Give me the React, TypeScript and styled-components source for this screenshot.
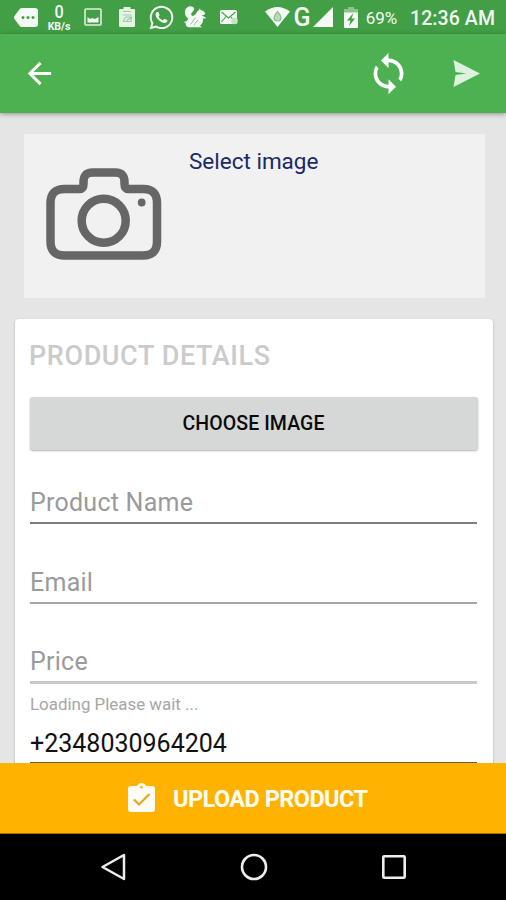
import React from "react";
import styled, { createGlobalStyle } from "styled-components";
import { MdArrowBack, MdSync } from "react-icons/md";
import { FaWhatsapp } from "react-icons/fa";

const GlobalStyle = createGlobalStyle`
  *, *::before, *::after { box-sizing: border-box; }
  body { margin: 0; font-family: Roboto, sans-serif; }
`;

const Screen = styled.div`
  width: 506px;
  height: 900px;
  display: flex;
  flex-direction: column;
  overflow: hidden;
  background: #e5e5e5;
`;

const StatusBar = styled.header`
  flex: none;
  height: 34px;
  display: flex;
  align-items: center;
  padding: 0 11px 0 14px;
  background: #429f46;
  color: #f4fbf4;
  white-space: nowrap;
`;

const StatusItem = styled.span<{ $width: number; $gap?: number }>`
  flex: none;
  width: ${(p) => p.$width}px;
  margin-left: ${(p) => p.$gap ?? 0}px;
  display: flex;
  justify-content: center;
  svg { display: block; flex: none; }
`;

const Speed = styled(StatusItem)`
  flex-direction: column;
  align-items: center;
`;

const SpeedValue = styled.span`
  font-size: 18px;
  font-weight: 500;
  line-height: 19px;
  transform: scaleX(0.9);
`;

const SpeedUnit = styled.span`
  font-size: 10.5px;
  font-weight: 700;
  line-height: 11px;
`;

const Network = styled(StatusItem)`
  font: 500 25px/30px Roboto, sans-serif;
  padding-top: 1px;
`;

const Percent = styled(StatusItem)`
  font-size: 17px;
  line-height: 34px;
  padding-top: 1px;
`;

const Clock = styled(StatusItem)`
  font-size: 19.5px;
  font-weight: 500;
  line-height: 34px;
  padding-top: 3px;
  letter-spacing: 0.1px;
`;

const AppBar = styled.nav`
  flex: none;
  z-index: 1;
  height: 79px;
  display: flex;
  align-items: center;
  padding: 0 26px 0 22px;
  background: #4eb151;
  box-shadow: 0 1px 5px rgba(0, 0, 0, 0.38);
  color: #fff;
`;

const IconButton = styled.button<{ $width: number; $gap?: string }>`
  width: ${(p) => p.$width}px;
  margin: 0 0 0 ${(p) => p.$gap ?? "0"};
  padding: 0;
  border: 0;
  background: none;
  color: inherit;
  display: flex;
  justify-content: center;
  svg { display: block; flex: none; }
`;

const Content = styled.main`
  flex: 1;
  min-height: 0;
  overflow: hidden;
  display: flex;
  flex-direction: column;
  padding: 21px 13px 0 15px;
`;

const ImagePicker = styled.section`
  flex: none;
  height: 164px;
  margin: 0 8px 21px 9px;
  padding: 34px 0 0 22px;
  display: flex;
  gap: 27px;
  background: #f1f1f1;
`;

const PickerLabel = styled.span`
  margin-top: -21px;
  font-size: 22.5px;
  line-height: 28px;
  color: #1b2a66;
`;

const Card = styled.section`
  flex: none;
  height: 500px;
  padding: 20px 16px 20px 15px;
  display: flex;
  flex-direction: column;
  border-radius: 4px;
  background: #fff;
  box-shadow: 0 1px 2px rgba(0, 0, 0, 0.35);
`;

const Title = styled.h1`
  margin: 0 0 0 -1px;
  height: 58px;
  font-size: 27px;
  font-weight: 500;
  line-height: 34px;
  letter-spacing: 0.6px;
  color: #cbcbcb;
`;

const ChooseButton = styled.button`
  flex: none;
  height: 53px;
  margin: 0 -1px 0 0;
  padding: 0 1px 0 0;
  border: 0;
  border-radius: 3px;
  background: #d6d8d7;
  box-shadow: 0 1px 2px rgba(0, 0, 0, 0.3);
  font: 500 19.5px/53px Roboto, sans-serif;
  letter-spacing: 0.1px;
  color: #0b0b0b;
`;

const Field = styled.div<{ $height: number; $line: string; $thick?: number; $value?: boolean }>`
  flex: none;
  height: ${(p) => p.$height}px;
  display: flex;
  align-items: flex-end;
  padding-bottom: ${(p) => (p.$value ? 3 : 4)}px;
  border-bottom: ${(p) => p.$thick ?? 2}px solid ${(p) => p.$line};
  font-size: 25px;
  line-height: 30px;
  letter-spacing: ${(p) => (p.$value ? 0 : 0.25)}px;
  color: ${(p) => (p.$value ? "#111" : "#9a9a9a")};
`;

const Hint = styled.div`
  height: 31px;
  padding-top: 9px;
  font-size: 16.9px;
  line-height: 22px;
  color: #a6a6a6;
`;

const UploadButton = styled.button`
  flex: none;
  z-index: 1;
  height: 71px;
  padding: 0 0 2px 128px;
  border: 0;
  border-bottom: 1px solid #a87600;
  display: flex;
  align-items: center;
  gap: 18px;
  background: #ffb300;
  color: #fffdf6;
`;

const UploadLabel = styled.span`
  padding-top: 3px;
  font: 700 23.5px/30px Roboto, sans-serif;
  letter-spacing: -0.55px;
`;

const NavBar = styled.footer`
  flex: none;
  height: 66px;
  display: flex;
  justify-content: space-between;
  align-items: center;
  padding: 0 99px 0 100px;
  background: #000;
`;

const TagIcon = () => (
  <svg width="24" height="19" viewBox="0 0 24 19">
    <path fill="currentColor" d="M8 0h13a3 3 0 0 1 3 3v13a3 3 0 0 1-3 3H8q-1.500 0-2.500-1.300L.5 11q-1-1.500 0-3l5-6.700Q6.500 0 8 0Z" />
    <g fill="#429f46"><circle cx="9" cy="9.500" r="1.500" /><circle cx="14" cy="9.500" r="1.500" /><circle cx="19" cy="9.500" r="1.500" /></g>
  </svg>
);

const PictureIcon = () => (
  <svg width="18" height="18" viewBox="0 0 18 18">
    <rect x="1" y="1" width="16" height="16" rx="1" fill="none" stroke="#dff0df" strokeWidth="1.600" />
    <path fill="currentColor" d="M3.500 14.500V9L6 11l2-1 3 1 3.500-2v5.500Z" />
  </svg>
);

const NotesIcon = () => (
  <svg width="16" height="20" viewBox="0 0 16 20">
    <path fill="#e6f4e6" d="M1 2h3.500V0h7v2H15q1 0 1 1v16q0 1-1 1H1q-1 0-1-1V3q0-1 1-1Z" />
    <path fill="none" stroke="#9ccc9e" strokeWidth="1.200" d="M4 4.500h8M3.500 8h9M4 14l3-4h5.500M4 14.500h8l.5-4-5 3" />
  </svg>
);

const SquirrelIcon = () => (
  <svg width="22" height="22" viewBox="0 0 22 22">
    <path fill="currentColor" d="M1 5C1.800 1.500 4.500 0 7.500.4c2.500.5 3.300 2.300 2.300 4C8.700 6 7 6.500 7.200 8.500c.3 1.700 2.300 2 3.800.3 1.500-1.500 2-3.800 3.900-4.600l.8-1.700 1 1.500c2.200.3 4 1.700 4.500 3.300-.3 1.500-1.800 2-3.700 1.800.8 1.100 2.900 1.500 4.500 2.800-.7 1-2.200.8-3.100.3.600 3-.4 5.500-3.100 7.500l2.400 1.500H6C3 21.700 1.300 19.500 1.600 16.500c-.7.500-1.200.2-1.600-.5 2-.3 3.700-1.500 4.300-3.500C2 11 .3 8.500 1 5Z" />
    <path fill="none" stroke="#78b87a" strokeWidth=".9" d="M6.500 18c2.500-1 2-4.500 5-6M10.500 19c0-3 2.500-3 3.500-5" />
  </svg>
);

const MailIcon = () => (
  <svg width="18" height="15" viewBox="0 0 18 15">
    <rect width="17" height="14" rx="1.500" fill="currentColor" />
    <path fill="none" stroke="#429f46" strokeWidth="1.100" d="m1.500 2 7 6 7-6M1.500 12l4.500-5.500M15 12l-4-5" />
    <circle cx="14.500" cy="11" r="3.300" fill="#c5e3c6" />
  </svg>
);

const WifiIcon = () => (
  <svg width="25" height="20" viewBox="0 0 25 20">
    <path fill="currentColor" d="M0 4.500Q12.500-4.500 25 4.500L12.500 20Z" />
    <path fill="#b9dcba" stroke="#82bd84" strokeWidth="1.200" d="M12.500 4.500c2 2.500 3.500 4 3.500 6a3.500 3.500 0 0 1-7 0c0-2 1.500-3.500 3.500-6Z" />
  </svg>
);

const SignalIcon = () => (
  <svg width="20" height="20" viewBox="0 0 20 20"><path fill="currentColor" d="M20 0v20H0Z" /></svg>
);

const BatteryIcon = () => (
  <svg width="14" height="21" viewBox="0 0 14 21">
    <path fill="#8cc48e" d="M4 0h6v2h4v4H0V2h4Z" />
    <path fill="currentColor" d="M0 5.500h14V20q0 1-1 1H1q-1 0-1-1Z" />
    <path fill="#429f46" d="M9.500 6 3 13.500h3.500L5 19l6-7.500H7.500Z" />
  </svg>
);

const SendIcon = () => (
  <svg width="27" height="27" viewBox="0 0 27 27">
    <path fill="#dcf2dc" d="M.5 0 27 13.500.5 27l2-12 11-1.500-11-1.500Z" />
  </svg>
);

const CameraIcon = () => (
  <svg width="116" height="92" viewBox="0 0 116 92">
    <g fill="none" stroke="#666" strokeWidth="8.500">
      <path d="M16.500 21h17q4 0 4-5V14q0-9.500 9-9.500h23q9 0 9 9.500v2q0 5 4 5h15q13.500 0 13.500 14v38.500Q111 87.500 97 87.500H18.500Q4.500 87.500 4.500 73.500V35q0-14 14-14Z" />
      <circle cx="57.700" cy="52.800" r="22" />
    </g>
    <circle cx="95.700" cy="34.500" r="3.900" fill="#666" />
  </svg>
);

const TaskIcon = () => (
  <svg width="27" height="29" viewBox="0 0 27 29">
    <path fill="currentColor" d="M3 3h6q1.500-3 4.500-3T18 3h6q3 0 3 3v20q0 3-3 3H3q-3 0-3-3V6q0-3 3-3Z" />
    <circle cx="13.500" cy="4.300" r="1.300" fill="#ffb300" />
    <path fill="none" stroke="#e5a91f" strokeWidth="2.200" d="m6 16.500 5 5L21.500 11" />
  </svg>
);

export default function App() {
  return (
    <>
      <GlobalStyle />
      <Screen>
        <StatusBar>
          <StatusItem $width={24}><TagIcon /></StatusItem>
          <Speed $width={24} $gap={9}><SpeedValue>0</SpeedValue><SpeedUnit>KB/s</SpeedUnit></Speed>
          <StatusItem $width={18} $gap={13}><PictureIcon /></StatusItem>
          <StatusItem $width={16} $gap={17}><NotesIcon /></StatusItem>
          <StatusItem $width={24} $gap={14}><FaWhatsapp size={27} /></StatusItem>
          <StatusItem $width={22} $gap={11}><SquirrelIcon /></StatusItem>
          <StatusItem $width={18} $gap={14}><MailIcon /></StatusItem>
          <StatusItem $width={25} $gap={27}><WifiIcon /></StatusItem>
          <Network $width={16} $gap={4}>G</Network>
          <StatusItem $width={20} $gap={3}><SignalIcon /></StatusItem>
          <StatusItem $width={14} $gap={11}><BatteryIcon /></StatusItem>
          <Percent $width={31} $gap={8}>69%</Percent>
          <Clock $width={85} $gap={13}>12:36 AM</Clock>
        </StatusBar>
        <AppBar>
          <IconButton $width={35} aria-label="Back"><MdArrowBack size={35} /></IconButton>
          <IconButton $width={45} $gap="auto" aria-label="Sync"><MdSync size={45} /></IconButton>
          <IconButton $width={27} $gap="42px" aria-label="Send"><SendIcon /></IconButton>
        </AppBar>
        <Content>
          <ImagePicker>
            <CameraIcon />
            <PickerLabel>Select image</PickerLabel>
          </ImagePicker>
          <Card>
            <Title>PRODUCT DETAILS</Title>
            <ChooseButton>CHOOSE IMAGE</ChooseButton>
            <Field $height={74} $line="#7d7d7d">Product Name</Field>
            <Field $height={80} $line="#a8a8a8">Email</Field>
            <Field $height={80} $line="#c9c9c9" $thick={3}>Price</Field>
            <Hint>Loading Please wait ...</Hint>
            <Field $height={49} $line="#66583a" $value>+2348030964204</Field>
          </Card>
        </Content>
        <UploadButton><TaskIcon /><UploadLabel>UPLOAD PRODUCT</UploadLabel></UploadButton>
        <NavBar>
          <svg width="26" height="28" viewBox="0 0 26 28">
            <path d="M2.500 14 24 2v24Z" fill="none" stroke="#eee" strokeWidth="2.500" strokeLinejoin="round" />
          </svg>
          <svg width="28" height="28" viewBox="0 0 28 28">
            <circle cx="14" cy="14" r="12" fill="none" stroke="#eee" strokeWidth="2.600" />
          </svg>
          <svg width="26" height="26" viewBox="0 0 26 26">
            <rect x="2.300" y="2.300" width="21.400" height="21.400" rx="1" fill="none" stroke="#eee" strokeWidth="2.600" />
          </svg>
        </NavBar>
      </Screen>
    </>
  );
}
